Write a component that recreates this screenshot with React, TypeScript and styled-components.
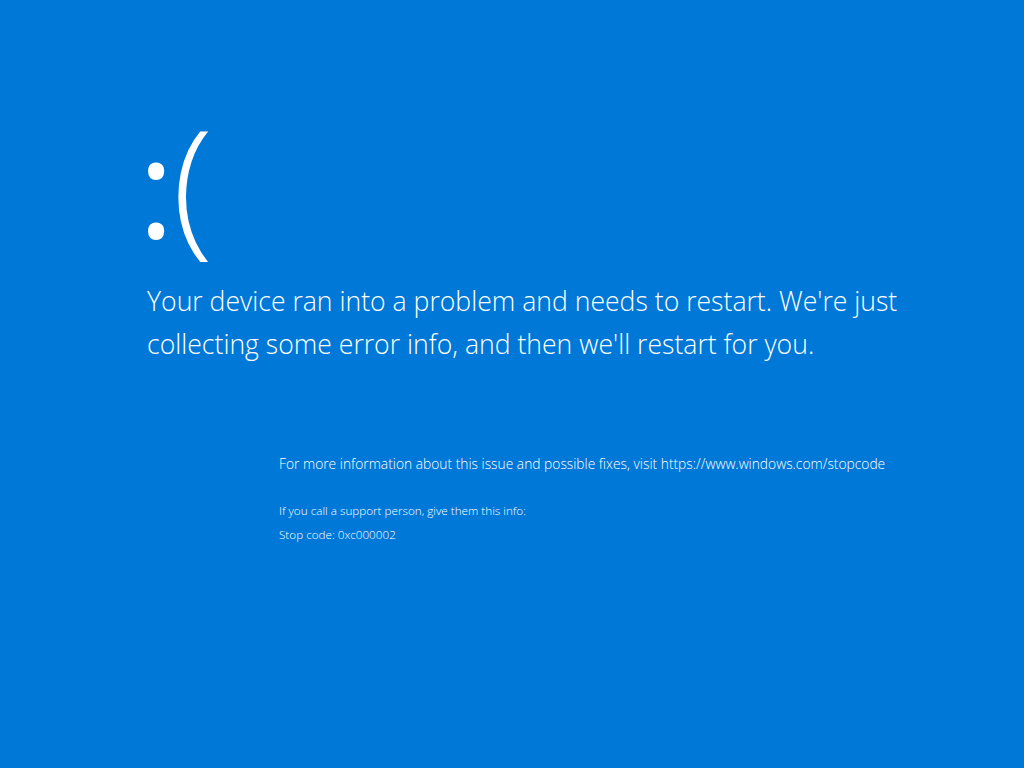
import React from 'react'
import styled, { createGlobalStyle } from 'styled-components'

const GlobalStyle = createGlobalStyle`
  html, body {
    margin: 0;
    padding: 0;
    background: #0078d7;
  }
  body {
    font-family: "Open Sans", "Noto Sans", "Liberation Sans", sans-serif;
    color: #ffffff;
  }
`

const Screen = styled.div`
  width: 1024px;
  height: 768px;
  background: #0078d7;
  box-sizing: border-box;
  padding: 94px 0 0 138px;
  overflow: hidden;
`

const Face = styled.div`
  font-size: 150px;
  font-weight: 300;
  line-height: 172px;
  height: 172px;
  display: flex;
  align-items: baseline;
`

const Eyes = styled.span`
  font-weight: 500;
  font-size: 138px;
  margin-right: -2px;
`

const Mouth = styled.span`
  font-weight: 300;
`

const Message = styled.p`
  margin: 14px 0 0;
  padding-left: 9px;
  font-size: 26.6px;
  font-weight: 300;
  line-height: 43px;
  width: 820px;
`

const Details = styled.div`
  margin-top: 88px;
  padding-left: 141px;
  display: flex;
  flex-direction: column;
`

const InfoLine = styled.div<{ $size: number; $gap: number }>`
  font-size: ${(p) => p.$size}px;
  font-weight: 300;
  line-height: 20px;
  margin-top: ${(p) => p.$gap}px;
  white-space: nowrap;
`

export default function App() {
  return (
    <>
      <GlobalStyle />
      <Screen>
        <Face>
          <Eyes>:</Eyes>
          <Mouth>(</Mouth>
        </Face>
        <Message>
          Your device ran into a problem and needs to restart. We're just
          collecting some error info, and then we'll restart for you.
        </Message>
        <Details>
          <InfoLine $size={13.8} $gap={0}>
            For more information about this issue and possible fixes, visit https://www.windows.com/stopcode
          </InfoLine>
          <InfoLine $size={11.7} $gap={26}>
            If you call a support person, give them this info:
          </InfoLine>
          <InfoLine $size={11.7} $gap={4}>
            Stop code: 0xc000002
          </InfoLine>
        </Details>
      </Screen>
    </>
  )
}
